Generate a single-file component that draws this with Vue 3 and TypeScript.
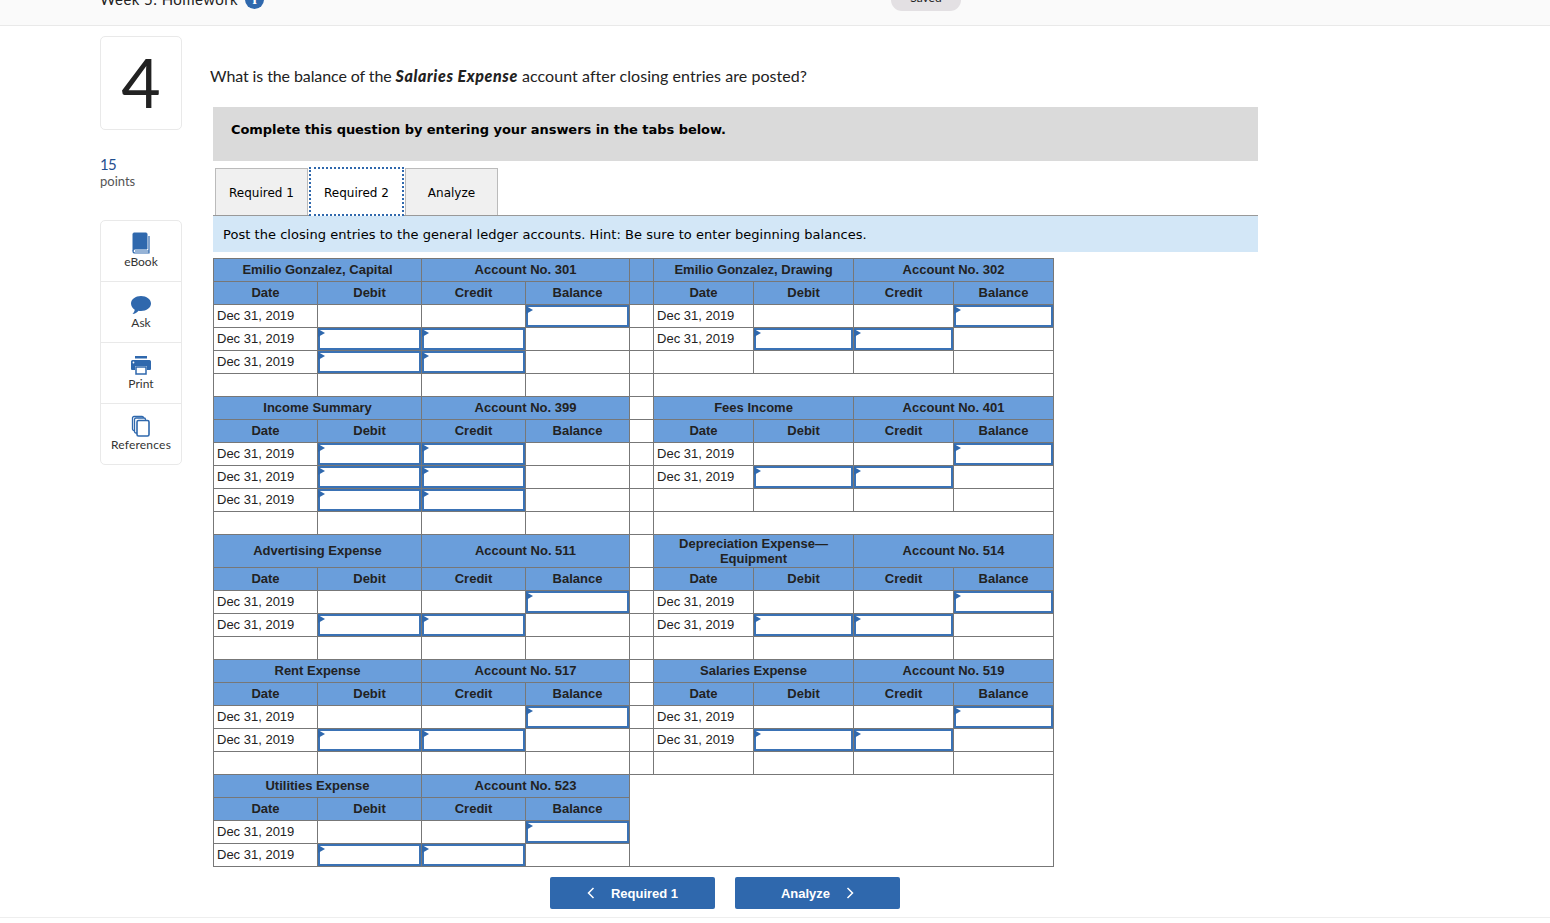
<script setup lang="ts">
type RowKind = 'bal' | 'dc' | 'blank' | 'wide'

interface Account {
  title: string
  no: number
}

interface Block {
  left: Account
  right: Account | null
  leftRows: RowKind[]
  rightRows: RowKind[]
  blueGap?: boolean
}

const blocks: Block[] = [
  {
    left: { title: 'Emilio Gonzalez, Capital', no: 301 },
    right: { title: 'Emilio Gonzalez, Drawing', no: 302 },
    leftRows: ['bal', 'dc', 'dc', 'blank'],
    rightRows: ['bal', 'dc', 'blank', 'wide'],
    blueGap: true,
  },
  {
    left: { title: 'Income Summary', no: 399 },
    right: { title: 'Fees Income', no: 401 },
    leftRows: ['dc', 'dc', 'dc', 'blank'],
    rightRows: ['bal', 'dc', 'blank', 'wide'],
  },
  {
    left: { title: 'Advertising Expense', no: 511 },
    right: { title: 'Depreciation Expense—Equipment', no: 514 },
    leftRows: ['bal', 'dc', 'blank'],
    rightRows: ['bal', 'dc', 'blank'],
  },
  {
    left: { title: 'Rent Expense', no: 517 },
    right: { title: 'Salaries Expense', no: 519 },
    leftRows: ['bal', 'dc', 'blank'],
    rightRows: ['bal', 'dc', 'blank'],
  },
  {
    left: { title: 'Utilities Expense', no: 523 },
    right: null,
    leftRows: ['bal', 'dc'],
    rightRows: [],
  },
]

const columns = ['Date', 'Debit', 'Credit', 'Balance']
const dateLabel = 'Dec 31, 2019'

// которая из трёх ячеек суммы является полем ввода
const isInput = (kind: RowKind, col: number) => {
  if (kind === 'bal') return col === 3
  if (kind === 'dc') return col === 1 || col === 2
  return false
}
</script>

<template>
  <div class="page">
    <header class="topbar">
      <div class="topbar-title">
        <span>Week 5: Homework</span>
        <span class="info">i</span>
      </div>
      <div class="saved">Saved</div>
    </header>

    <main class="main">
      <aside class="side">
        <div class="number">4</div>
        <div class="points">
          <div class="points-num">15</div>
          <div class="points-label">points</div>
        </div>
        <nav class="tools">
          <div class="tool">
            <svg class="tool-icon" width="20" height="22" viewBox="0 0 20 22">
              <path d="M3 1h12a1 1 0 0 1 1 1v15H4a2 2 0 0 0-2 2V2a1 1 0 0 1 1-1z" fill="#2f68ad" stroke="#2f68ad" />
              <path d="M2 19a2 2 0 0 0 2 2h14V4" fill="none" stroke="#2f68ad" stroke-width="1.2" />
              <path d="M4 19h14" stroke="#2f68ad" stroke-width="1" />
            </svg>
            <span>eBook</span>
          </div>
          <div class="tool">
            <svg class="tool-icon" width="22" height="22" viewBox="0 0 22 22">
              <path d="M11 3c5.500 0 10 3.200 10 7.500S16.500 18 11 18c-.9 0-1.700-.1-2.500-.2C7 19.600 5 21 2.500 21c1.300-1.200 2-2.600 2.200-4.300C2.500 15.300 1 13 1 10.500 1 6.200 5.500 3 11 3z" fill="#2f68ad" />
            </svg>
            <span>Ask</span>
          </div>
          <div class="tool">
            <svg class="tool-icon" width="22" height="22" viewBox="0 0 22 22">
              <rect x="5" y="2" width="12" height="2.500" fill="#2f68ad" />
              <path d="M2.500 6h17A1.500 1.500 0 0 1 21 7.500V15a1 1 0 0 1-1 1h-3v-4H5v4H2a1 1 0 0 1-1-1V7.500A1.500 1.500 0 0 1 2.500 6z" fill="#2f68ad" />
              <circle cx="3.500" cy="8.500" r=".9" fill="#fff" />
              <path d="M6 13h10v7H6z" fill="#fff" stroke="#2f68ad" stroke-width="1.500" />
            </svg>
            <span>Print</span>
          </div>
          <div class="tool">
            <svg class="tool-icon" width="20" height="22" viewBox="0 0 20 22" fill="#fff" stroke="#2f68ad" stroke-width="1.300">
              <rect x="1.500" y="1.500" width="11" height="14" rx="1.500" />
              <rect x="3.500" y="3" width="11" height="15" rx="1.500" />
              <rect x="6" y="5.500" width="12" height="15.500" rx="1.500" stroke-width="1.600" />
            </svg>
            <span class="tool-wide">References</span>
          </div>
        </nav>
      </aside>

      <section class="content">
        <p class="question">
          What is the balance of the <b><i>Salaries Expense</i></b> <span class="question-end">account after closing entries are posted?</span>
        </p>

        <div class="notice">Complete this question by entering your answers in the tabs below.</div>

        <div class="tabs">
          <div class="tab">Required 1</div>
          <div class="tab active">Required 2</div>
          <div class="tab">Analyze</div>
        </div>

        <div class="hint">Post the closing entries to the general ledger accounts. Hint: Be sure to enter beginning balances.</div>

        <table class="ledger">
          <colgroup>
            <col v-for="n in 4" :key="'l' + n" class="col-left" />
            <col class="col-gap" />
            <col v-for="n in 4" :key="'r' + n" class="col-right" />
          </colgroup>
          <tbody>
            <template v-for="block in blocks" :key="block.left.no">
              <tr :class="{ tall: block.left.no === 511 }">
                <th colspan="2">{{ block.left.title }}</th>
                <th colspan="2">Account No. {{ block.left.no }}</th>
                <template v-if="block.right">
                  <td :class="{ blue: block.blueGap }"></td>
                  <th colspan="2">{{ block.right.title }}</th>
                  <th colspan="2">Account No. {{ block.right.no }}</th>
                </template>
                <td v-else colspan="5" rowspan="4"></td>
              </tr>
              <tr>
                <th v-for="c in columns" :key="c">{{ c }}</th>
                <template v-if="block.right">
                  <td :class="{ blue: block.blueGap }"></td>
                  <th v-for="c in columns" :key="c">{{ c }}</th>
                </template>
              </tr>
              <tr v-for="(kind, i) in block.leftRows" :key="i">
                <td class="date">{{ kind === 'blank' ? '' : dateLabel }}</td>
                <td v-for="col in [1, 2, 3]" :key="col" class="amount">
                  <div v-if="isInput(kind, col)" class="entry"></div>
                </td>
                <template v-if="block.right">
                  <td></td>
                  <td v-if="block.rightRows[i] === 'wide'" colspan="4"></td>
                  <template v-else>
                    <td class="date">{{ block.rightRows[i] === 'blank' ? '' : dateLabel }}</td>
                    <td v-for="col in [1, 2, 3]" :key="col" class="amount">
                      <div v-if="isInput(block.rightRows[i], col)" class="entry"></div>
                    </td>
                  </template>
                </template>
              </tr>
            </template>
          </tbody>
        </table>

        <div class="nav-buttons">
          <button class="nav-btn">
            <svg width="8" height="12" viewBox="0 0 8 12"><path d="M6.500 1 1.500 6l5 5" fill="none" stroke="#fff" stroke-width="1.500" /></svg>
            <span>Required 1</span>
          </button>
          <button class="nav-btn">
            <span>Analyze</span>
            <svg width="8" height="12" viewBox="0 0 8 12"><path d="m1.500 1 5 5-5 5" fill="none" stroke="#fff" stroke-width="1.500" /></svg>
          </button>
        </div>
      </section>
    </main>
    <div class="footer-line"></div>
  </div>
</template>

<style scoped>
.page {
  height: 923px;
  overflow: hidden;
  background: #fff;
  font-family: Lato, 'Open Sans', sans-serif;
  color: #222;
}

.topbar {
  position: relative;
  height: 25px;
  overflow: hidden;
  background: #fafafa;
  border-bottom: 1px solid #e9e9e9;
}

.topbar-title {
  display: flex;
  align-items: center;
  gap: 7px;
  height: 18px;
  margin-top: -10px;
  padding-left: 100px;
  font-size: 15px;
  letter-spacing: 0.42px;
}

.info {
  display: flex;
  align-items: center;
  justify-content: center;
  width: 19px;
  height: 19px;
  border-radius: 50%;
  background: #2f68ad;
  color: #fff;
  font-family: 'Liberation Serif', serif;
  font-weight: 700;
  font-size: 15px;
}

.saved {
  position: absolute;
  top: -12px;
  left: 891px;
  width: 70px;
  height: 23px;
  border-radius: 11px;
  background: #e3e0e3;
  text-align: center;
  font-size: 12px;
  line-height: 20px;
}

.main {
  display: flex;
  padding: 10px 0 0 100px;
}

.side {
  width: 82px;
  flex: none;
}

.number {
  height: 94px;
  box-sizing: border-box;
  border: 1px solid #e9e9e9;
  border-radius: 5px;
  text-align: center;
  font-size: 68px;
  line-height: 90px;
  color: #222;
}

.points {
  margin-top: 25px;
  height: 65px;
}

.points-num {
  font-size: 15px;
  line-height: 18px;
  letter-spacing: -0.8px;
  color: #1f4f8f;
}

.points-label {
  font-size: 13px;
  line-height: 17px;
  color: #555;
}

.tools {
  border: 1px solid #e9e9e9;
  border-radius: 5px;
}

.tool {
  display: flex;
  flex-direction: column;
  align-items: center;
  box-sizing: border-box;
  height: 61px;
  padding-top: 11px;
  font-size: 12px;
  line-height: 14px;
  color: #333;
  border-bottom: 1px solid #e9e9e9;
}

.tool:last-child {
  border-bottom: none;
  height: 60px;
}

.tool-icon {
  display: block;
  margin-bottom: 1px;
}

.tool-wide {
  letter-spacing: 0.2px;
}

.content {
  width: 1045px;
  margin-left: 31px;
}

.question {
  margin: 30px 0 0 -3px;
  font-size: 16px;
  line-height: 20px;
  letter-spacing: -0.1px;
  color: #222;
}

.question b {
  font-weight: 900;
  letter-spacing: 0.6px;
}

.question-end {
  letter-spacing: 0.06px;
}

.notice {
  height: 54px;
  box-sizing: border-box;
  margin-top: 21px;
  padding: 14px 18px;
  background: #dadada;
  font-family: 'DejaVu Sans', sans-serif;
  font-weight: 700;
  font-size: 13px;
  line-height: 18px;
  letter-spacing: -0.05px;
  color: #000;
}

.tabs {
  display: flex;
  height: 49px;
  box-sizing: border-box;
  margin-top: 6px;
  padding-left: 2px;
  padding-top: 1px;
  border-bottom: 1px solid #999;
  font-family: 'DejaVu Sans', sans-serif;
  font-size: 12px;
  color: #000;
}

.tab {
  display: flex;
  align-items: center;
  justify-content: center;
  width: 93px;
  box-sizing: border-box;
  padding-top: 2px;
  border: 1px solid #bbb;
  border-bottom: none;
  background: #f0f0f0;
}

.tab.active {
  width: 95px;
  margin: -1px 1px -1px 1px;
  background: #fff;
  border: 2px dotted #2f68ad;
}

.hint {
  height: 36px;
  box-sizing: border-box;
  padding: 11px 10px;
  background: #d3e7f7;
  font-family: 'DejaVu Sans', sans-serif;
  font-size: 13px;
  line-height: 16px;
  letter-spacing: 0.04px;
  color: #000;
}

.ledger {
  table-layout: fixed;
  width: 841px;
  margin-top: 6px;
  border-collapse: collapse;
  font-family: 'Liberation Sans', Arial, sans-serif;
  font-size: 13px;
  line-height: 15px;
  color: #222;
}

.col-left {
  width: 104px;
}

.col-gap {
  width: 24px;
}

.col-right {
  width: 100px;
}

.ledger tr {
  height: 23px;
}

.ledger tr.tall {
  height: 33px;
}

.ledger th,
.ledger td {
  padding: 0 0 1px;
  border: 1px solid #777;
}

.ledger th {
  background: #6a9edb;
  font-weight: 700;
  text-align: center;
}

.ledger td.blue {
  background: #6a9edb;
}

.ledger td.date {
  padding-left: 3px;
  white-space: nowrap;
}

.ledger td.amount {
  padding: 0;
  vertical-align: top;
}

.entry {
  position: relative;
  height: 22px;
  box-sizing: border-box;
  border: 2px solid #3a72b5;
  background: #fff;
}

.entry::before {
  content: '';
  position: absolute;
  top: -1px;
  left: -2px;
  border-left: 7px solid #2f68ad;
  border-top: 4px solid transparent;
  border-bottom: 4px solid transparent;
}

.nav-buttons {
  display: flex;
  gap: 20px;
  margin: 10px 0 0 337px;
}

.nav-btn {
  display: flex;
  align-items: center;
  justify-content: center;
  gap: 16px;
  width: 165px;
  height: 32px;
  border: none;
  border-radius: 2px;
  background: #2f68ad;
  color: #fff;
  font-family: 'Liberation Sans', Arial, sans-serif;
  font-weight: 700;
  font-size: 13px;
}

.footer-line {
  margin-top: 8px;
  border-top: 1px solid #eee;
}
</style>

<style>
html,
body {
  overflow: hidden;
}
</style>
